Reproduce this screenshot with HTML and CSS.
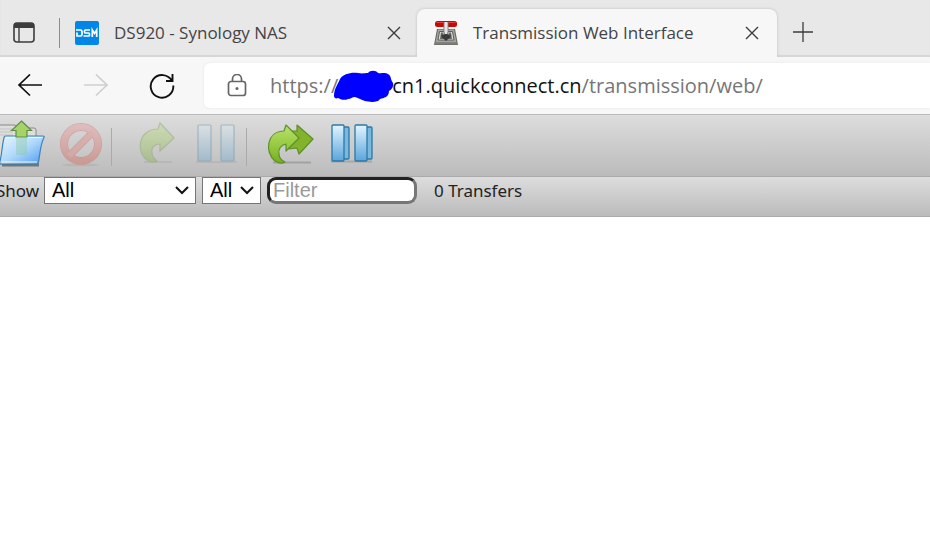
FILE: index.html
```html
<!DOCTYPE html>
<html lang="en">
<head>
    <meta charset="UTF-8">
    <meta name="viewport" content="width=device-width, initial-scale=1.0">
    <title>Transmission Web Interface</title>
    <link rel="stylesheet" href="styles.css">
</head>
<body>
    <!-- Browser tabs -->
    <header class="tab-strip">
        <button type="button" class="tab-actions" aria-label="Tab actions">
            <svg width="22" height="22" viewBox="0 0 22 22">
                <rect x="1" y="1" width="20" height="19" rx="3" fill="none" stroke="#3c3c3c" stroke-width="1.6"/>
                <path d="M1 6V4a3 3 0 0 1 3-3h14a3 3 0 0 1 3 3v2z" fill="#3c3c3c"/>
                <path d="M6 6v14" stroke="#3c3c3c" stroke-width="1.4"/>
            </svg>
        </button>
        <div class="tab">
            <svg class="favicon" width="24" height="24" viewBox="0 0 24 24">
                <rect width="24" height="24" rx="2" fill="#0086e8"/>
                <g fill="none" stroke="#fff" stroke-width="1.7">
                    <path d="M1 9h4.500q1.500 0 1.500 1.500v3q0 1.500-1.500 1.500H2v-3.500"/>
                    <path d="M15 9h-4.500q-1 0-1 1v1q0 1 1 1h3q1 0 1 1v1q0 1-1 1H8.500"/>
                    <path d="M17.300 16V9l2.200 3.500L21.700 9v7"/>
                </g>
            </svg>
            <a href="#" class="tab-title">DS920 - Synology NAS</a>
            <button type="button" class="tab-close" aria-label="Close DS920 tab">
                <svg width="14" height="14" viewBox="0 0 14 14"><path d="M1 1l12 12M13 1L1 13" stroke="#3c3c3c" stroke-width="1.4"/></svg>
            </button>
        </div>
        <div class="tab active">
            <svg class="favicon" width="24" height="24" viewBox="0 0 24 24">
                <path d="M3 8h18l3 16H0z" fill="#656762"/>
                <path d="M4 8.500h16l2.500 13h-21z" fill="#a3a59f"/>
                <path d="M5.500 10.500h13l1.500 8.500H4z" fill="#dcddd8" stroke="#5d5f5b" stroke-width="1"/>
                <path d="M7 11.500l-1 6.500h12l-1-6.500h-2l.5 4h-7l.5-4z" fill="#666864"/>
                <rect x="1" y="0" width="22" height="6" rx="2.500" fill="#c40a0a"/>
                <path d="M2.500 1.500h19" stroke="#e8403a"/>
                <path d="M9.500 1.500h5V14h-5z" fill="#777"/>
                <path d="M10.500 1h3v13h-3z" fill="#e6e6e6"/>
                <path d="M7.500 13.500h3v-2h3v2h3V16L12 20l-4.500-4z" fill="#383b3a"/>
                <path d="M10.800 2h2.400v11h-2.400z" fill="#e6e6e6"/>
                <path d="M1 22.500h22" stroke="#7c7f79" stroke-width="2"/>
            </svg>
            <a href="#" class="tab-title">Transmission Web Interface</a>
            <button type="button" class="tab-close" aria-label="Close Transmission tab">
                <svg width="14" height="14" viewBox="0 0 14 14"><path d="M1 1l12 12M13 1L1 13" stroke="#3c3c3c" stroke-width="1.4"/></svg>
            </button>
        </div>
        <button type="button" class="new-tab" aria-label="New tab">
            <svg width="22" height="22" viewBox="0 0 22 22"><path d="M11 1v20M1 11h20" stroke="#3c3c3c" stroke-width="1.3"/></svg>
        </button>
    </header>

    <!-- Address bar -->
    <nav class="nav-bar">
        <button type="button" aria-label="Back">
            <svg width="26" height="24" viewBox="0 0 26 24" fill="none" stroke="#111" stroke-width="1.7"><path d="M25 11H2M13 .5L2 11l11 10.500"/></svg>
        </button>
        <button type="button" aria-label="Forward" disabled>
            <svg width="26" height="24" viewBox="0 0 26 24" fill="none" stroke="#cfcfcf" stroke-width="1.7"><path d="M1 11h23M13 .5L24 11 13 21.500"/></svg>
        </button>
        <button type="button" aria-label="Refresh">
            <svg width="26" height="26" viewBox="0 0 26 26" fill="none" stroke="#111" stroke-width="1.9"><path d="M23 8A11.300 11.300 0 1 0 24.300 12.500M23.500 1v7H17"/></svg>
        </button>
        <div class="address">
            <svg class="lock" width="20" height="24" viewBox="0 0 20 24" fill="none" stroke="#666" stroke-width="1.7">
                <rect x="1.500" y="7.500" width="17" height="14" rx="2.500"/>
                <path d="M5.500 7.500V5a4.500 4.500 0 0 1 9 0v2.500"/>
                <circle cx="10" cy="14.500" r="1.500" fill="#666" stroke="none"/>
            </svg>
            <div class="url" role="textbox" aria-label="Address" contenteditable="true" spellcheck="false"><span>https://</span><svg class="scribble" width="60" height="34" viewBox="0 0 60 34"><path d="M0 27C0 20 4 15 6 10C9 5 17 3 24 4C29 5 31 4 34 4C36 1 42 1 44 4C48 5 51 3 54 5C58 8 56 10 59 14C60 18 57 21 55 22C55 28 50 29 46 30C44 34 35 33 31 32C27 31 25 29 21 28C18 28 17 30 14 30C10 32 6 30 4 29C2 30 0 29 0 27Z" fill="#00f"/></svg><strong>cn1.quickconnect.cn</strong><span>/transmission/web/</span></div>
        </div>
    </nav>

    <svg class="defs" width="0" height="0" aria-hidden="true">
        <defs>
            <linearGradient id="green" x1="0" y1="0" x2="0" y2="1"><stop offset="0" stop-color="#b9e070"/><stop offset="0.5" stop-color="#98cc42"/><stop offset="1" stop-color="#78ac22"/></linearGradient>
            <linearGradient id="blue" x1="0" y1="0" x2="0" y2="1"><stop offset="0" stop-color="#e2f5ff"/><stop offset="1" stop-color="#5aa5dc"/></linearGradient>
            <linearGradient id="folder" x1="0" y1="0" x2="1" y2="1"><stop offset="0" stop-color="#e8f6ff"/><stop offset="0.5" stop-color="#b0d8fa"/><stop offset="1" stop-color="#4a9af0"/></linearGradient>
            <linearGradient id="red" x1="0" y1="0" x2="0" y2="1"><stop offset="0" stop-color="#f08080"/><stop offset="1" stop-color="#e04430"/></linearGradient>
        </defs>
    </svg>

    <!-- Torrent actions -->
    <div class="toolbar">
        <button type="button" aria-label="Open torrent">
            <svg width="48" height="48" viewBox="0 0 48 48">
                <path d="M0 6q0-1 2-1h16l2 3h17q2 0 2 2v34H0z" fill="#dedede" stroke="#888"/>
                <path d="M3 9h13M3 12h13M3 15h13" stroke="#c2c2c2"/>
                <path d="M5 45h37" stroke="#444" stroke-opacity="0.6" stroke-width="3"/>
                <path d="M9 16h37q1.500 0 1 1.500C43 25 43 35 41.500 42q0 2-2.500 2H4q-2 0-1-3C5 34 5 25 7 18q0-2 2-2z" fill="url(#folder)" stroke="#3f83b8" stroke-width="1.200"/>
                <path d="M9.500 17.500h36M5 42h35" stroke="#eaf8ff" stroke-width="1.200"/>
                <path d="M19 17h11v18H19z" fill="#8cc8a0" fill-opacity="0.400"/>
                <path d="M24.500 1l10 9.500h-4.500V17H19v-6.500h-4.500z" fill="#a4d468" stroke="#5f8f45" stroke-width="1.200"/>
            </svg>
        </button>
        <button type="button" aria-label="Remove selected" disabled>
            <svg width="48" height="48" viewBox="0 0 48 48">
                <ellipse cx="24" cy="45" rx="19" ry="1.500" fill="#555" fill-opacity="0.300"/>
                <path d="M12 36L36 12" stroke="#cc3c36" stroke-width="7"/>
                <circle cx="24" cy="24" r="17" fill="none" stroke="#c83a34" stroke-width="8"/>
                <circle cx="24" cy="24" r="17" fill="none" stroke="url(#red)" stroke-width="6.500"/>
                <path d="M12 36L36 12" stroke="#e96860" stroke-width="5.500"/>
            </svg>
        </button>
        <div class="separator"></div>
        <button type="button" aria-label="Start selected" disabled>
            <svg width="48" height="48" viewBox="0 0 48 48">
                <path d="M12 42h28" stroke="#555" stroke-opacity="0.300" stroke-width="2"/>
                <path d="M28 3l14 15-14 13v-7c-5 0-9 3-8 9 0 4 2 6 5 8-3 2-7 1-10-1C3 31 7 9 26 9z" fill="url(#green)" stroke="#5c9028" stroke-width="1.200"/>
            </svg>
        </button>
        <button type="button" aria-label="Pause selected" disabled>
            <svg width="48" height="48" viewBox="0 0 48 48">
                <path d="M4 42h41" stroke="#555" stroke-opacity="0.300" stroke-width="2"/>
                <g fill="url(#blue)" stroke="#28719c" stroke-width="1.200">
                    <rect x="6" y="5" width="13" height="36" rx="1"/>
                    <rect x="29" y="5" width="13" height="36" rx="1"/>
                </g>
            </svg>
        </button>
        <div class="separator"></div>
        <button type="button" aria-label="Start all">
            <svg width="48" height="48" viewBox="0 0 48 48">
                <path d="M6 42.500h38" stroke="#555" stroke-opacity="0.300" stroke-width="2"/>
                <g stroke="#5c9028" stroke-width="1.200" stroke-linejoin="round">
                    <path d="M30 5l16 14-14 15-2-6-8 1V11h8z" fill="#83b32c"/>
                    <path d="M19 5l13 13-13 13v-7c-5 1-8 5-7 10 0 4 2 6 6 8-3 2-7 1-10-1C-3 32 0 11 17 11z" fill="url(#green)"/>
                </g>
            </svg>
        </button>
        <button type="button" aria-label="Pause all">
            <svg width="48" height="48" viewBox="0 0 48 48">
                <path d="M4 41.500h41" stroke="#555" stroke-opacity="0.250" stroke-width="2"/>
                <g fill="#79b8df" stroke="#2c78a6" stroke-width="1.300">
                    <rect x="12" y="7" width="10" height="32" rx="1"/>
                    <rect x="35" y="7" width="10" height="32" rx="1"/>
                </g>
                <g fill="url(#blue)" stroke="#2c78a6" stroke-width="1.300">
                    <rect x="5" y="5" width="12" height="36" rx="1"/>
                    <rect x="28" y="5" width="12" height="36" rx="1"/>
                </g>
            </svg>
        </button>
    </div>

    <!-- Filters -->
    <form class="statusbar">
        <label for="filter-mode">Show</label>
        <div class="select-box mode">
            <select id="filter-mode">
                <option>All</option>
                <option>Active</option>
                <option>Downloading</option>
                <option>Seeding</option>
                <option>Paused</option>
                <option>Finished</option>
            </select>
            <svg width="14" height="9" viewBox="0 0 14 9"><path d="M1 1l6 6 6-6" fill="none" stroke="#111" stroke-width="2"/></svg>
        </div>
        <div class="select-box tracker">
            <select id="filter-tracker" aria-label="Tracker">
                <option>All</option>
            </select>
            <svg width="14" height="9" viewBox="0 0 14 9"><path d="M1 1l6 6 6-6" fill="none" stroke="#111" stroke-width="2"/></svg>
        </div>
        <input type="search" id="torrent-search" placeholder="Filter" aria-label="Filter">
        <span class="count">0 Transfers</span>
    </form>

    <main class="torrent-list"></main>
</body>
</html>
```

FILE: styles.css
```css
* {
    box-sizing: border-box;
}
body {
    margin: 0;
    font-family: "Open Sans", "Noto Sans", sans-serif;
    background-color: #fff;
    overflow-x: hidden;
}
button {
    display: flex;
    align-items: center;
    justify-content: center;
    flex-shrink: 0;
    padding: 0;
    border: none;
    background: none;
    cursor: pointer;
}
svg {
    display: block;
    flex-shrink: 0;
}
.defs {
    position: absolute;
}

/* Tabs */
.tab-strip {
    display: flex;
    align-items: flex-end;
    height: 57px;
    background-color: #e8e8e8;
    box-shadow: inset 0 -2px 1px #d6d6d6;
}
.tab-actions {
    width: 60px;
    height: 30px;
    margin-bottom: 9px;
    padding-right: 12px;
    border-right: 1px solid #8c8c8c;
}
.tab {
    display: flex;
    align-items: center;
    width: 360px;
    height: 48px;
    padding: 0 18px 0 17px;
}
.tab:not(.active) {
    width: 357px;
    padding: 0 16px 0 15px;
}
.tab.active {
    background-color: #f7f7f7;
    border-radius: 8px 8px 0 0;
    box-shadow: 0 0 3px #bbb;
    clip-path: inset(-4px -4px 0 -4px);
}
.tab-title {
    flex: 1;
    margin-left: 15px;
    font-size: 17px;
    line-height: 24px;
    font-weight: 400;
    color: #444;
    text-decoration: none;
    white-space: nowrap;
}
.new-tab {
    width: 52px;
    height: 50px;
}

/* Address bar */
.nav-bar {
    display: flex;
    align-items: center;
    gap: 40px;
    height: 57px;
    padding-left: 17px;
    background-color: #f7f7f7;
}
.address {
    display: flex;
    align-items: center;
    flex: 1;
    gap: 23px;
    height: 45px;
    margin-left: -11px;
    padding-left: 23px;
    background-color: #fff;
    border-radius: 6px 0 0 6px;
    box-shadow: 0 0 3px #e4e4e4;
}
.url {
    display: flex;
    align-items: center;
    font-size: 20px;
    line-height: 30px;
    color: #767676;
    white-space: nowrap;
    outline: none;
}
.url strong {
    font-weight: 400;
    color: #111;
}
.scribble {
    margin: 0 -2px 0 -4px;
}

/* Toolbar */
.toolbar {
    display: flex;
    align-items: center;
    gap: 12px;
    height: 63px;
    margin-left: -3px;
    padding-bottom: 3px;
    background: linear-gradient(#ddd, #bbb);
    border-top: 1px solid #bbb;
    border-bottom: 1px solid #aaa;
}
.toolbar button:disabled {
    opacity: 0.3;
}
.separator {
    width: 1px;
    height: 38px;
    margin: 6px 8px 0 -6px;
    background-color: #aaa;
}

/* Filter row */
.statusbar {
    display: flex;
    align-items: flex-start;
    gap: 6px;
    height: 40px;
    margin-left: -4px;
    background: linear-gradient(#ddd, #bbb);
    border-bottom: 1px solid #aaa;
    font-family: "Noto Sans", sans-serif;
    font-size: 17px;
    line-height: 28px;
    color: #222;
    white-space: nowrap;
}
.statusbar label {
    width: 42px;
}
.select-box {
    display: grid;
    align-items: center;
    height: 27px;
}
.select-box.mode {
    width: 152px;
}
.select-box.tracker {
    width: 59px;
}
.select-box select,
.select-box svg {
    grid-area: 1 / 1;
}
.select-box svg {
    justify-self: end;
    margin-right: 7px;
    pointer-events: none;
}
select,
input {
    width: 100%;
    height: 27px;
    margin: 0;
    font-family: "Liberation Sans", Arial, sans-serif;
    font-size: 20px;
    color: #000;
    background-color: #fff;
}
select {
    appearance: none;
    padding: 0 7px 2px;
    border: 1px solid #767676;
    border-radius: 0;
}
input {
    width: 150px;
    padding: 0 3px;
    appearance: none;
    border: 3px inset #767676;
    border-radius: 9px;
}
input::placeholder {
    color: #999;
}
.count {
    margin-left: 11px;
}
.torrent-list {
    min-height: 300px;
}
```
